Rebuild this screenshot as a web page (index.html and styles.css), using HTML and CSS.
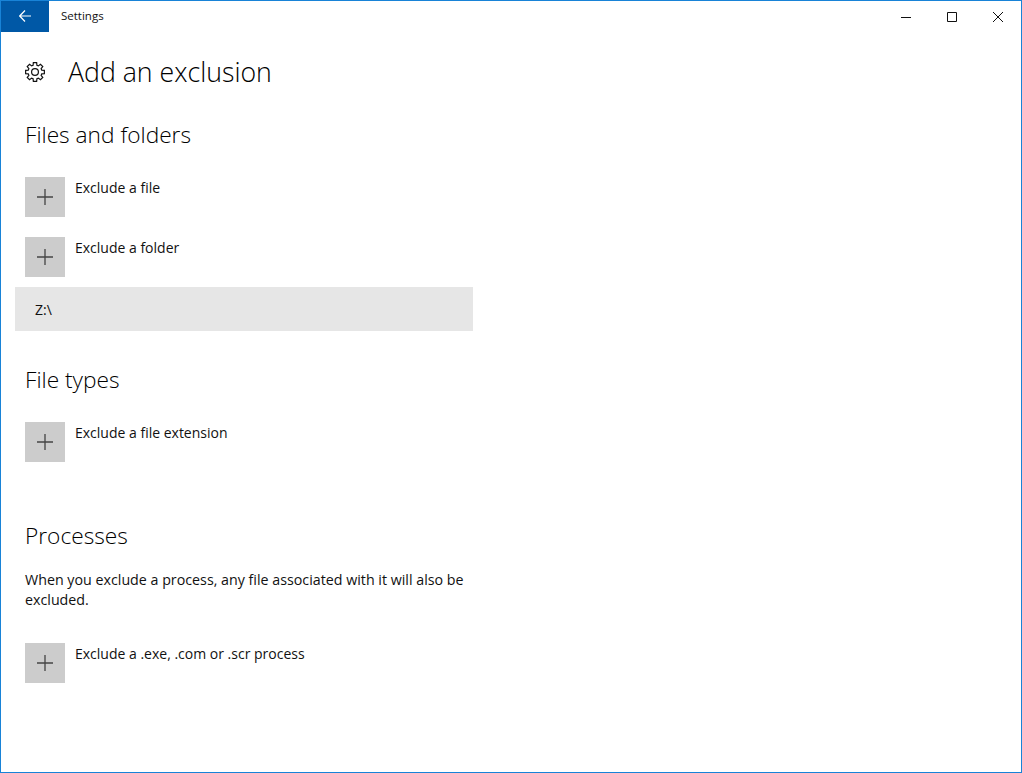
FILE: index.html
```html
<!DOCTYPE html>
<html lang="en">
<head>
  <meta charset="UTF-8">
  <title>Settings</title>
  <link rel="stylesheet" href="styles.css">
</head>
<body>
  <div class="window">
    <div class="titlebar">
      <div class="back">
        <svg class="back-arrow" width="12" height="12" viewBox="0 0 12 12" fill="none" stroke="#fff" stroke-width="1.2"><path d="M12 6H.8M6 .5.7 6 6 11.5"/></svg>
      </div>
      <span class="app-title">Settings</span>
      <div class="controls">
        <div class="control"><svg width="12" height="12" viewBox="0 0 12 12" stroke="#111" fill="none"><path d="M1 6.5h10"/></svg></div>
        <div class="control"><svg width="12" height="12" viewBox="0 0 12 12" stroke="#111" fill="none"><path d="M1.5 1.5h9v9h-9z"/></svg></div>
        <div class="control"><svg width="12" height="12" viewBox="0 0 12 12" stroke="#111" fill="none"><path d="M1 1l10 10M11 1 1 11"/></svg></div>
      </div>
    </div>

    <div class="content">
      <div class="page-head">
        <svg class="gear" width="20" height="20" viewBox="0 0 20 20" fill="none" stroke="#111" stroke-width="1.2"><path d="M8.07 3.27 8.35.64h3.3l.28 2.63 1.46.61 2.06-1.66 2.33 2.33-1.66 2.06.61 1.46 2.63.28v3.3l-2.63.28-.61 1.46 1.66 2.06-2.33 2.33-2.06-1.66-1.46.61-.28 2.63h-3.3l-.28-2.63-1.46-.61-2.06 1.66-2.33-2.33 1.66-2.06-.61-1.46-2.63-.28v-3.3l2.63-.28.61-1.46-1.66-2.06 2.33-2.33 2.06 1.66z"/><circle cx="10" cy="10" r="3.4"/></svg>
        <h1>Add an exclusion</h1>
      </div>

      <h2 class="first">Files and folders</h2>
      <div class="add-row">
        <div class="plus"><svg width="18" height="18" viewBox="0 0 18 18" stroke="#444" stroke-width="1.3"><path d="M9 1v16M1 9h16"/></svg></div>
        <span>Exclude a file</span>
      </div>
      <div class="add-row">
        <div class="plus"><svg width="18" height="18" viewBox="0 0 18 18" stroke="#444" stroke-width="1.3"><path d="M9 1v16M1 9h16"/></svg></div>
        <span>Exclude a folder</span>
      </div>
      <div class="selected-item">Z:\</div>

      <h2 class="types">File types</h2>
      <div class="add-row">
        <div class="plus"><svg width="18" height="18" viewBox="0 0 18 18" stroke="#444" stroke-width="1.3"><path d="M9 1v16M1 9h16"/></svg></div>
        <span>Exclude a file extension</span>
      </div>

      <h2 class="processes">Processes</h2>
      <p class="note">When you exclude a process, any file associated with it will also be excluded.</p>
      <div class="add-row">
        <div class="plus"><svg width="18" height="18" viewBox="0 0 18 18" stroke="#444" stroke-width="1.3"><path d="M9 1v16M1 9h16"/></svg></div>
        <span>Exclude a .exe, .com or .scr process</span>
      </div>
    </div>
  </div>
</body>
</html>
```

FILE: styles.css
```css
* { box-sizing: border-box; }
html, body { margin: 0; height: 100%; }
body { background: #fff; color: #111; font-family: "Open Sans", "Noto Sans", sans-serif; font-size: 14px; overflow: hidden; }
.window { height: 773px; border: 1px solid #1883d7; display: flex; flex-direction: column; }

.titlebar { height: 31px; display: flex; align-items: center; flex-shrink: 0; }
.back { width: 48px; height: 31px; background: #0058a6; display: flex; align-items: center; justify-content: center; }
.back-arrow { margin-bottom: 2px; }
.app-title { margin: 0 0 2px 12px; font-size: 11.5px; }
.controls { margin-left: auto; display: flex; }
.control { width: 46px; height: 31px; display: flex; align-items: center; justify-content: center; }

.content { padding: 0 0 0 24px; width: 472px; }
.page-head { display: flex; align-items: center; height: 40px; margin-top: 20px; }
h1 { margin: 0 0 0 23px; font-size: 26.7px; font-weight: 300; line-height: 40px; color: #000; }
h2 { margin: 0; font-size: 22.7px; font-weight: 300; line-height: 32px; color: #000; }
h2.first { margin-top: 27px; margin-bottom: 26px; }
h2.types { margin-top: 33px; margin-bottom: 26px; }
h2.processes { margin-top: 58px; margin-bottom: 18px; }

.add-row { display: flex; align-items: flex-start; gap: 10px; margin-bottom: 20px; line-height: 20px; }
.add-row span { padding-top: 1px; }
.plus { width: 40px; height: 40px; background: #ccc; display: flex; align-items: center; justify-content: center; flex-shrink: 0; }
.selected-item { margin: -10px 0 0 -10px; width: 458px; height: 44px; background: #e6e6e6; padding: 1px 0 0 20px; line-height: 44px; }
.note { margin: 0 0 33px; font-size: 14.25px; line-height: 20px; width: 448px; }
```
